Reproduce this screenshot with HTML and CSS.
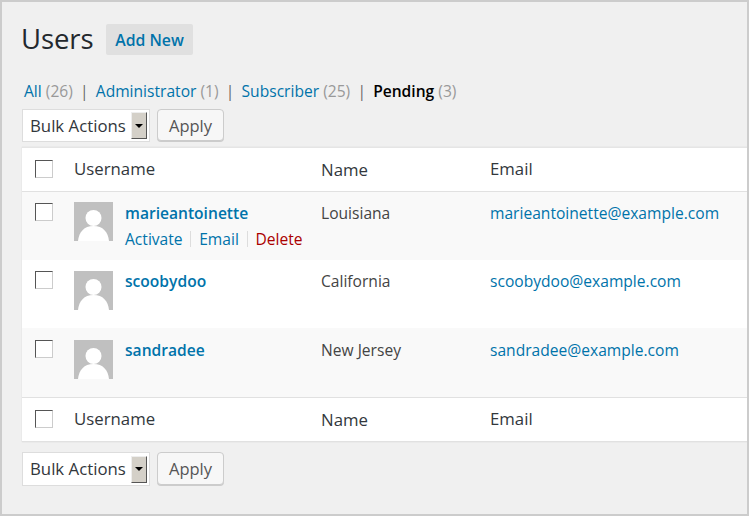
FILE: index.html
```html
<!DOCTYPE html>
<html lang="en">
<head>
  <meta charset="UTF-8">
  <title>Users</title>
  <link rel="stylesheet" href="styles.css">
</head>
<body>
  <div class="wrap">
    <div class="page-head">
      <h1>Users</h1>
      <a class="add-new" href="#">Add New</a>
    </div>

    <ul class="filters">
      <li><a href="#">All</a> <span class="count">(26)</span></li>
      <li class="sep">|</li>
      <li><a href="#">Administrator</a> <span class="count">(1)</span></li>
      <li class="sep">|</li>
      <li><a href="#">Subscriber</a> <span class="count">(25)</span></li>
      <li class="sep">|</li>
      <li><a class="current" href="#">Pending</a> <span class="count">(3)</span></li>
    </ul>

    <div class="bulk">
      <div class="select">Bulk Actions<span class="arrow"></span></div>
      <button class="apply">Apply</button>
    </div>

    <table class="users">
      <thead>
        <tr>
          <th class="col-check"><span class="check"></span></th>
          <th class="col-user">Username</th>
          <th class="col-name">Name</th>
          <th class="col-email">Email</th>
        </tr>
      </thead>
      <tbody>
        <tr class="alt">
          <td class="col-check"><span class="check"></span></td>
          <td class="col-user">
            <div class="user">
              <svg class="avatar" viewBox="0 0 39 39"><rect width="39" height="39" fill="#c0c0c0"/><circle cx="19.5" cy="16" r="8" fill="#fff"/><path d="M4 39C5 30 10 24 19.500 24S34 30 35 39z" fill="#fff"/></svg>
              <div>
                <a class="login" href="#">marieantoinette</a>
                <div class="row-actions">
                  <a href="#">Activate</a><span class="pipe"></span><a href="#">Email</a><span class="pipe"></span><a class="delete" href="#">Delete</a>
                </div>
              </div>
            </div>
          </td>
          <td class="col-name">Louisiana</td>
          <td class="col-email"><a href="#">marieantoinette@example.com</a></td>
        </tr>
        <tr class="low-avatar">
          <td class="col-check"><span class="check"></span></td>
          <td class="col-user">
            <div class="user">
              <svg class="avatar" viewBox="0 0 39 39"><rect width="39" height="39" fill="#c0c0c0"/><circle cx="19.5" cy="16" r="8" fill="#fff"/><path d="M4 39C5 30 10 24 19.500 24S34 30 35 39z" fill="#fff"/></svg>
              <a class="login" href="#">scoobydoo</a>
            </div>
          </td>
          <td class="col-name">California</td>
          <td class="col-email"><a href="#">scoobydoo@example.com</a></td>
        </tr>
        <tr class="alt low-avatar last">
          <td class="col-check"><span class="check"></span></td>
          <td class="col-user">
            <div class="user">
              <svg class="avatar" viewBox="0 0 39 39"><rect width="39" height="39" fill="#c0c0c0"/><circle cx="19.5" cy="16" r="8" fill="#fff"/><path d="M4 39C5 30 10 24 19.500 24S34 30 35 39z" fill="#fff"/></svg>
              <a class="login" href="#">sandradee</a>
            </div>
          </td>
          <td class="col-name">New Jersey</td>
          <td class="col-email"><a href="#">sandradee@example.com</a></td>
        </tr>
      </tbody>
      <tfoot>
        <tr>
          <th class="col-check"><span class="check"></span></th>
          <th class="col-user">Username</th>
          <th class="col-name">Name</th>
          <th class="col-email">Email</th>
        </tr>
      </tfoot>
    </table>

    <div class="bulk bulk-bottom">
      <div class="select">Bulk Actions<span class="arrow"></span></div>
      <button class="apply">Apply</button>
    </div>
  </div>
</body>
</html>
```

FILE: styles.css
```css
* {
  box-sizing: border-box;
}
html, body {
  margin: 0;
  padding: 0;
}
body {
  font-family: "Open Sans", sans-serif;
  font-size: 15.6px;
  color: #444;
  background-color: #f1f1f1;
}
a {
  color: #0073aa;
  text-decoration: none;
}
.wrap {
  width: 749px;
  height: 516px;
  overflow: hidden;
  padding: 0 0 0 20px;
  border: 2px solid #ccc;
  background-color: #f0f0f0;
}

.page-head {
  display: flex;
  align-items: center;
  height: 31px;
  margin-top: 22px;
}
h1 {
  width: 84px;
  margin: -3px 0 0;
  font-size: 27.500px;
  font-weight: 400;
  line-height: 31px;
  letter-spacing: -0.1px;
  color: #23282d;
  text-indent: -1px;
}
.add-new {
  width: 87px;
  height: 31px;
  line-height: 32px;
  text-align: center;
  font-size: 15.8px;
  font-weight: 600;
  border-radius: 2px;
  background-color: #e0e0e0;
}

.filters {
  display: flex;
  gap: 7.200px;
  list-style: none;
  height: 24px;
  margin: 24px 0 0 2px;
  padding: 0;
  line-height: 24px;
  white-space: nowrap;
}
.filters .count {
  color: #999;
}
.filters .sep {
  color: #666;
}
.filters .current {
  color: #000;
  font-weight: 600;
}

.bulk {
  display: flex;
  gap: 7px;
  margin-top: 6px;
  height: 33px;
}
.bulk-bottom {
  margin-top: 10px;
  height: 34px;
}
.bulk-bottom .select {
  padding-bottom: 1px;
}
.bulk-bottom .arrow {
  margin-top: 1px;
}
.bulk-bottom .apply {
  height: 33px;
  padding-top: 0;
}
.select {
  display: flex;
  align-items: center;
  justify-content: space-between;
  width: 128px;
  height: 100%;
  padding: 0 2px 0 7px;
  border: 1px solid #ddd;
  background-color: #fff;
  color: #32373c;
  font-size: 16.8px;
}
.arrow {
  display: flex;
  align-items: center;
  justify-content: center;
  width: 16px;
  height: 27px;
  border: 1px solid;
  border-color: #eee #555 #555 #eee;
  background-color: #d4d0c8;
}
.arrow::after {
  content: "";
  border-style: solid;
  border-width: 4px 4px 0;
  border-color: #000 transparent transparent;
}
.apply {
  width: 67px;
  height: 32px;
  padding: 1px 0 0;
  border: 1px solid #ccc;
  border-radius: 4px;
  background-color: #f7f7f7;
  box-shadow: 0 1px 0 #ccc;
  color: #555;
  font-family: inherit;
  font-size: 16.5px;
}

.users {
  width: 725px;
  margin-top: 5px;
  table-layout: fixed;
  border-collapse: collapse;
  background-color: #fff;
  box-shadow: 0 0 1px #ccc;
  border-top: 1px solid #e5e5e5;
}
.users th {
  height: 44px;
  padding: 0;
  text-align: left;
  font-size: 16.8px;
  font-weight: 400;
  color: #32373c;
}
.users thead tr {
  border-bottom: 1px solid #e1e1e1;
}
.users tfoot tr {
  border-top: 1px solid #e1e1e1;
  border-bottom: 1px solid #e1e1e1;
}
.users td {
  height: 68px;
  padding: 9px 0 0;
  vertical-align: top;
  line-height: 24px;
}
.users .last td {
  height: 70px;
  padding-top: 10px;
}
.users .alt {
  background-color: #f9f9f9;
}
.col-check {
  width: 52px;
  padding-left: 13px !important;
}
.col-user {
  width: 247px;
}
.col-name {
  width: 169px;
}
.users th.col-user, .users th.col-check, .users th.col-email {
  padding-bottom: 2px;
}
.users tbody .col-check {
  padding-top: 11px;
}
.users .last .col-check {
  padding-top: 12px;
}
.check {
  display: block;
  width: 18px;
  height: 18px;
  border: 1px solid;
  border-color: #555 #ccc #ccc #555;
  background-color: #fff;
}
.user {
  display: flex;
  gap: 12px;
  margin-top: 1px;
}
.low-avatar .avatar {
  margin-top: 1px;
}
.avatar {
  display: block;
  flex: none;
  width: 39px;
  height: 39px;
}
.login {
  display: block;
  font-weight: 600;
  font-size: 15.6px;
  line-height: 22px;
}
.row-actions {
  display: flex;
  align-items: center;
  margin-top: 3px;
  line-height: 24px;
}
.pipe {
  width: 1px;
  height: 16px;
  margin: 0 7.800px;
  background-color: #ddd;
}
.delete {
  color: #a00;
}
```
